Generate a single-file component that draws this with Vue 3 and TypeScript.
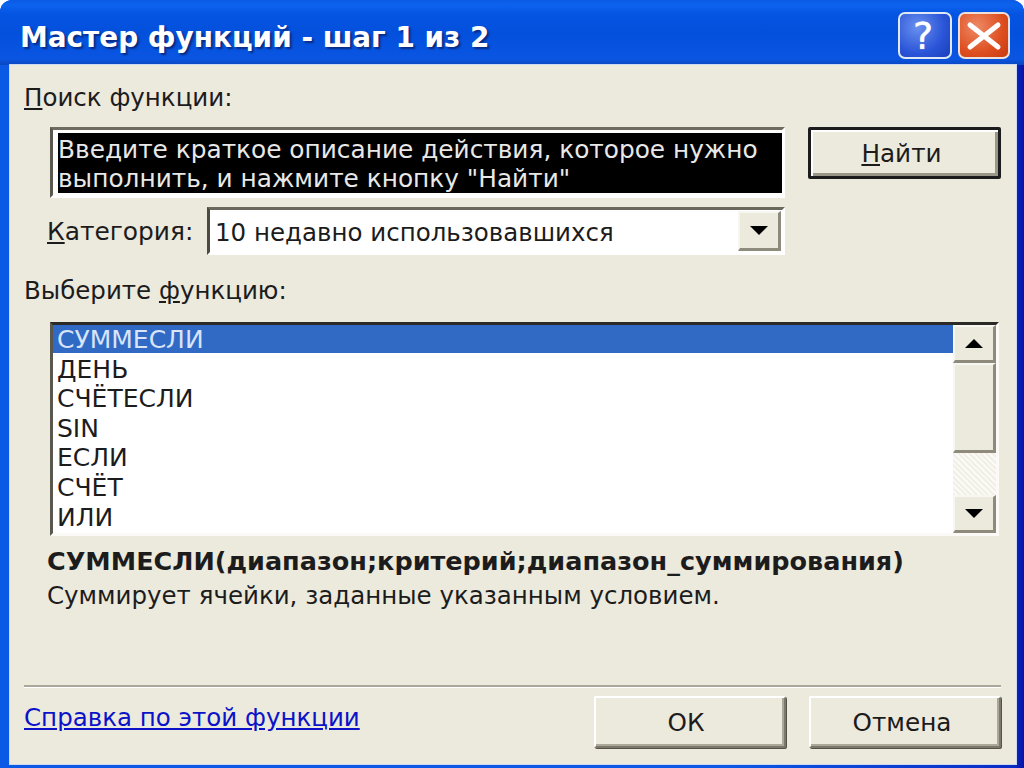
<script setup lang="ts">
const items: string[] = ['СУММЕСЛИ', 'ДЕНЬ', 'СЧЁТЕСЛИ', 'SIN', 'ЕСЛИ', 'СЧЁТ', 'ИЛИ']
</script>

<template>
  <div class="window">
    <header class="titlebar">
      <h1 class="title">Мастер функций - шаг 1 из 2</h1>
      <div class="caption-buttons">
        <button class="cap help" aria-label="Справка">?</button>
        <button class="cap close" aria-label="Закрыть">
          <svg viewBox="0 0 48 40" width="48" height="40"><path d="M10 9 L38 31 M38 9 L10 31" stroke="#fff" stroke-width="5" stroke-linecap="round" fill="none" /></svg>
        </button>
      </div>
    </header>

    <main class="client">
      <div class="label search-label"><u>П</u>оиск функции:</div>

      <section class="search-row">
        <div class="search-box">
          <div class="search-text">Введите краткое описание действия, которое нужно<br />выполнить, и нажмите кнопку "Найти"</div>
        </div>
        <button class="btn default-btn"><span><u>Н</u>айти</span></button>
      </section>

      <section class="cat-row">
        <span class="label cat-label"><u>К</u>атегория:</span>
        <div class="combo">
          <span class="combo-text">10 недавно использовавшихся</span>
          <span class="sb-btn combo-btn"><i class="tri down"></i></span>
        </div>
      </section>

      <div class="label choose-label">Выберите <u>ф</u>ункцию:</div>

      <section class="listbox">
        <ul class="rows">
          <li v-for="(item, i) in items" :key="item" class="row" :class="{ selected: i === 0 }">{{ item }}</li>
        </ul>
        <div class="scrollbar">
          <span class="sb-btn arrow"><i class="tri up"></i></span>
          <span class="sb-btn thumb"></span>
          <span class="track"></span>
          <span class="sb-btn arrow"><i class="tri down"></i></span>
        </div>
      </section>

      <div class="signature">СУММЕСЛИ(диапазон;критерий;диапазон_суммирования)</div>
      <div class="label description">Суммирует ячейки, заданные указанным условием.</div>

      <div class="spacer"></div>
      <div class="separator"></div>

      <footer class="footer">
        <a class="link" href="#">Справка по этой функции</a>
        <div class="footer-buttons">
          <button class="btn ok-btn">ОК</button>
          <button class="btn">Отмена</button>
        </div>
      </footer>
    </main>
  </div>
</template>

<style>
html, body { margin: 0; background: #fff; }
</style>

<style scoped>
.window {
  width: 1024px;
  height: 768px;
  box-sizing: border-box;
  display: flex;
  flex-direction: column;
  overflow: hidden;
  background: linear-gradient(90deg, #0a5ae6 0, #0a5ae6 70%, #0a2cc4 99%, #0812a8 100%);
  border-radius: 12px 12px 0 0;
  font-family: "DejaVu Sans", Verdana, sans-serif;
  color: #1c1c1c;
}
.titlebar {
  height: 65px;
  flex: none;
  display: flex;
  align-items: flex-start;
  justify-content: space-between;
  padding: 0 14px 0 20px;
  box-sizing: border-box;
  background: linear-gradient(180deg, #0a5ae6 0, #0c63ee 5px, #0554e2 14px, #0350dc 50%, #0a56e2 90%, #0a47c0 100%);
}
.title {
  margin: 21px 0 0;
  font-size: 27.9px;
  line-height: 34px;
  font-weight: 700;
  color: #fff;
  text-shadow: 2px 2px 2px #0a2a80;
  white-space: nowrap;
}
.caption-buttons { display: flex; gap: 6px; margin-top: 12px; }
.cap {
  width: 52px;
  height: 47px;
  box-sizing: border-box;
  padding: 0;
  border: 2px solid #e0e8f6;
  border-radius: 7px;
  display: flex;
  align-items: center;
  justify-content: center;
  color: #fff;
  font-family: "DejaVu Sans", sans-serif;
  font-weight: 400;
  font-size: 38px;
  line-height: 1;
}
.help { width: 54px; padding-right: 4px; background: radial-gradient(circle at 35% 30%, #6a90ee, #2a55d8 60%, #1b3fb8); text-shadow: 0 0 1px #fff; }
.close { background: radial-gradient(circle at 35% 30%, #ee8a66, #dd4f20 60%, #c83a10); border-color: #eedfd8; }

.client {
  flex: 1;
  display: flex;
  flex-direction: column;
  margin: 0 8px 4px 10px;
  padding: 0 15px 16px 14px;
  background: #ece9dd;
  min-height: 0;
  box-shadow: 0 0 0 1px #cdd8f2;
}
.label { font-size: 24.5px; line-height: 30px; white-space: nowrap; }
.search-label { margin-top: 18px; }

.search-row { display: flex; align-items: flex-start; margin-top: 14px; height: 71px; }
.search-box {
  width: 735px;
  height: 71px;
  margin-left: 26px;
  box-sizing: border-box;
  border-top: 3px solid #6e6b60;
  border-left: 3px solid #5a574e;
  border-right: 3px solid #fff;
  border-bottom: 3px solid #fff;
  padding: 3px 0 0 5px;
  background: #fdfdfb;
}
.search-text {
  background: #000;
  color: #e8e8e8;
  height: 60px;
  padding-top: 2px;
  box-sizing: border-box;
  font-size: 24.8px;
  line-height: 29px;
  white-space: nowrap;
  overflow: hidden;
}
.btn {
  width: 193px;
  height: 52px;
  box-sizing: border-box;
  padding: 0 6px 0 0;
  background: #ece9dd;
  font-family: inherit;
  font-size: 24.7px;
  color: #1c1c1c;
  border: 2px solid #fff;
  border-right-color: #7c786c;
  border-bottom-color: #7c786c;
  box-shadow: inset -2px -2px 0 #aca899, 1px 1px 0 #55524a;
  border-radius: 2px;
}
.ok-btn { padding-right: 8px; }
.default-btn {
  margin-left: 23px;
  border: 3px solid #1c1c1c;
  box-shadow: inset 2px 2px 0 #fff, inset -3px -3px 0 #9a9688;
}

.cat-row { display: flex; align-items: center; margin-top: 9px; height: 48px; }
.cat-label { margin-left: 23px; width: 160px; font-size: 24.9px; padding-top: 2px; }
.combo {
  width: 578px;
  height: 48px;
  box-sizing: border-box;
  display: flex;
  align-items: center;
  justify-content: space-between;
  background: #fff;
  border-top: 3px solid #6a675c;
  border-left: 3px solid #4c4a42;
  border-right: 3px solid #fff;
  border-bottom: 3px solid #fff;
  padding: 0 1px 0 5px;
}
.combo-text { font-size: 24.5px; white-space: nowrap; padding-top: 2px; }
.sb-btn {
  display: flex;
  align-items: center;
  justify-content: center;
  box-sizing: border-box;
  background: #ece9dd;
  border-top: 2px solid #f8f6f0;
  border-left: 2px solid #f8f6f0;
  border-right: 3px solid #8e8a7c;
  border-bottom: 3px solid #8e8a7c;
}
.combo-btn { width: 43px; height: 40px; flex: none; }
.tri { display: block; width: 0; height: 0; border-left: 9px solid transparent; border-right: 9px solid transparent; }
.tri.down { border-top: 9px solid #000; }
.tri.up { border-bottom: 9px solid #000; }

.choose-label { margin-top: 21px; }

.listbox {
  margin: 16px 0 0 26px;
  width: 949px;
  height: 214px;
  flex: none;
  box-sizing: border-box;
  display: flex;
  background: #fff;
  border-top: 3px solid #2c2a26;
  border-left: 3px solid #5a574e;
  border-right: 3px solid #fbfaf6;
  border-bottom: 3px solid #fbfaf6;
}
.rows { list-style: none; margin: 0; padding: 0; flex: 1; min-width: 0; overflow: hidden; }
.row {
  height: 29.6px;
  line-height: 30px;
  padding-left: 4px;
  font-size: 25px;
  white-space: nowrap;
}
.row.selected { background: linear-gradient(180deg, #316ac5 0 28px, transparent 28px); color: #d8e4f8; }
.scrollbar { width: 43px; flex: none; display: flex; flex-direction: column; }
.arrow { height: 38px; flex: none; }
.thumb { height: 90px; flex: none; }
.track {
  flex: 1;
  background-color: #fbfaf6;
  background-image: repeating-linear-gradient(45deg, #f2efe6 0 2px, #fbfaf6 2px 4px);
}

.signature {
  margin-top: 10px;
  margin-left: 23px;
  font-size: 25.5px;
  line-height: 30px;
  font-weight: 700;
  white-space: nowrap;
}
.description { margin: 5px 0 0 23px; }
.spacer { flex: 1; }
.separator { height: 3px; box-sizing: border-box; background: #aca899; border-bottom: 1px solid #fff; }

.footer { display: flex; justify-content: space-between; align-items: flex-start; margin-top: 8px; }
.link { color: #0b12c8; font-size: 24.5px; line-height: 30px; margin-top: 7px; text-decoration: underline; white-space: nowrap; }
.footer-buttons { display: flex; gap: 23px; }
.footer-buttons .btn { width: 192px; }
</style>
